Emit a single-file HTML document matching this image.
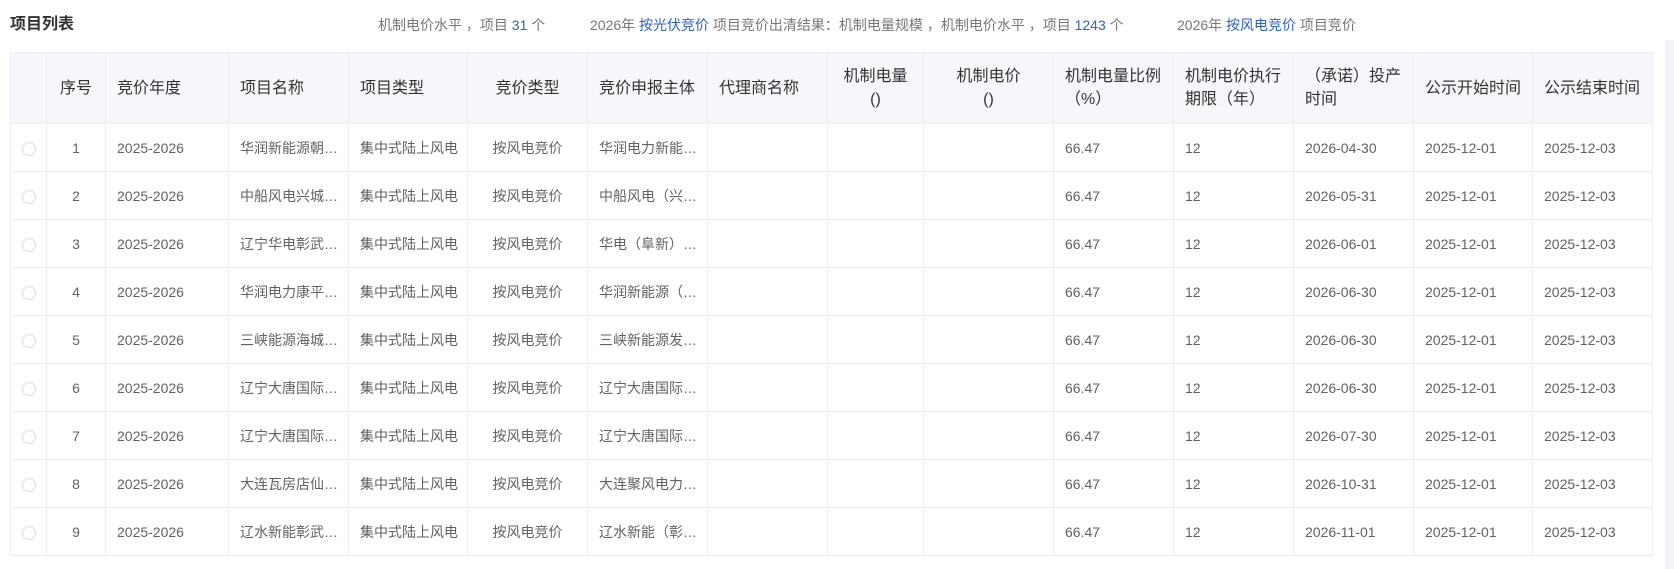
<!DOCTYPE html>
<html><head><meta charset="utf-8"><style>
*{margin:0;padding:0;box-sizing:border-box}
body{width:1674px;height:569px;background:#fff;font-family:"Liberation Sans","Noto Sans CJK SC",sans-serif;position:relative;overflow:hidden;color:#606266}
.title{position:absolute;left:10px;top:13px;font-size:16px;font-weight:bold;color:#333;line-height:24px}
.s{position:absolute;top:13px;font-size:14px;line-height:24px;color:#777;white-space:nowrap}
.s b{font-weight:normal;color:#2f63b8}
table{position:absolute;left:10px;top:52px;border-collapse:collapse;table-layout:fixed;width:1642px}
td,th{border:1px solid #ebeef5;padding:0 11px;white-space:nowrap;overflow:hidden;text-align:left}
th{background:#f5f7fa;height:71px;font-weight:normal;font-size:16px;color:#333;line-height:23px;white-space:normal}
td{height:48px;font-size:14px;color:#606266}
.c{text-align:center}
.r{display:inline-block;width:14px;height:14px;border:1px solid #dcdfe6;border-radius:50%;vertical-align:middle}
.sb{position:absolute;left:1665px;top:40px;width:9px;height:529px;background:#f3f4f7}
</style></head><body>
<div class="title">项目列表</div>
<div class="s" style="left:378px">机制电价水平 ，项目 <b>31</b> 个</div>
<div class="s" style="left:590px">2026年 <b>按光伏竞价</b> 项目竞价出清结果：机制电量规模 ，机制电价水平 ，项目 <b>1243</b> 个</div>
<div class="s" style="left:1177px">2026年 <b>按风电竞价</b> 项目竞价</div>
<div class="sb"></div>
<table>
<colgroup><col style="width:36px"><col style="width:59px"><col style="width:123px"><col style="width:120px"><col style="width:119px"><col style="width:120px"><col style="width:120px"><col style="width:120px"><col style="width:96px"><col style="width:130px"><col style="width:120px"><col style="width:120px"><col style="width:120px"><col style="width:119px"><col style="width:120px"></colgroup>
<tr><th></th><th class="c">序号</th><th>竞价年度</th><th>项目名称</th><th>项目类型</th><th class="c">竞价类型</th><th>竞价申报主体</th><th>代理商名称</th><th class="c">机制电量<br>()</th><th class="c">机制电价<br>()</th><th>机制电量比例<br>（%）</th><th>机制电价执行期限（年）</th><th>（承诺）投产时间</th><th>公示开始时间</th><th>公示结束时间</th></tr>
<tr><td class="c" style="padding:0"><span class="r"></span></td><td class="c">1</td><td>2025-2026</td><td>华润新能源朝…</td><td>集中式陆上风电</td><td class="c">按风电竞价</td><td>华润电力新能…</td><td></td><td></td><td></td><td>66.47</td><td>12</td><td>2026-04-30</td><td>2025-12-01</td><td>2025-12-03</td></tr>
<tr><td class="c" style="padding:0"><span class="r"></span></td><td class="c">2</td><td>2025-2026</td><td>中船风电兴城…</td><td>集中式陆上风电</td><td class="c">按风电竞价</td><td>中船风电（兴…</td><td></td><td></td><td></td><td>66.47</td><td>12</td><td>2026-05-31</td><td>2025-12-01</td><td>2025-12-03</td></tr>
<tr><td class="c" style="padding:0"><span class="r"></span></td><td class="c">3</td><td>2025-2026</td><td>辽宁华电彰武…</td><td>集中式陆上风电</td><td class="c">按风电竞价</td><td>华电（阜新）…</td><td></td><td></td><td></td><td>66.47</td><td>12</td><td>2026-06-01</td><td>2025-12-01</td><td>2025-12-03</td></tr>
<tr><td class="c" style="padding:0"><span class="r"></span></td><td class="c">4</td><td>2025-2026</td><td>华润电力康平…</td><td>集中式陆上风电</td><td class="c">按风电竞价</td><td>华润新能源（…</td><td></td><td></td><td></td><td>66.47</td><td>12</td><td>2026-06-30</td><td>2025-12-01</td><td>2025-12-03</td></tr>
<tr><td class="c" style="padding:0"><span class="r"></span></td><td class="c">5</td><td>2025-2026</td><td>三峡能源海城…</td><td>集中式陆上风电</td><td class="c">按风电竞价</td><td>三峡新能源发…</td><td></td><td></td><td></td><td>66.47</td><td>12</td><td>2026-06-30</td><td>2025-12-01</td><td>2025-12-03</td></tr>
<tr><td class="c" style="padding:0"><span class="r"></span></td><td class="c">6</td><td>2025-2026</td><td>辽宁大唐国际…</td><td>集中式陆上风电</td><td class="c">按风电竞价</td><td>辽宁大唐国际…</td><td></td><td></td><td></td><td>66.47</td><td>12</td><td>2026-06-30</td><td>2025-12-01</td><td>2025-12-03</td></tr>
<tr><td class="c" style="padding:0"><span class="r"></span></td><td class="c">7</td><td>2025-2026</td><td>辽宁大唐国际…</td><td>集中式陆上风电</td><td class="c">按风电竞价</td><td>辽宁大唐国际…</td><td></td><td></td><td></td><td>66.47</td><td>12</td><td>2026-07-30</td><td>2025-12-01</td><td>2025-12-03</td></tr>
<tr><td class="c" style="padding:0"><span class="r"></span></td><td class="c">8</td><td>2025-2026</td><td>大连瓦房店仙…</td><td>集中式陆上风电</td><td class="c">按风电竞价</td><td>大连聚风电力…</td><td></td><td></td><td></td><td>66.47</td><td>12</td><td>2026-10-31</td><td>2025-12-01</td><td>2025-12-03</td></tr>
<tr><td class="c" style="padding:0"><span class="r"></span></td><td class="c">9</td><td>2025-2026</td><td>辽水新能彰武…</td><td>集中式陆上风电</td><td class="c">按风电竞价</td><td>辽水新能（彰…</td><td></td><td></td><td></td><td>66.47</td><td>12</td><td>2026-11-01</td><td>2025-12-01</td><td>2025-12-03</td></tr>
</table>
</body></html>
